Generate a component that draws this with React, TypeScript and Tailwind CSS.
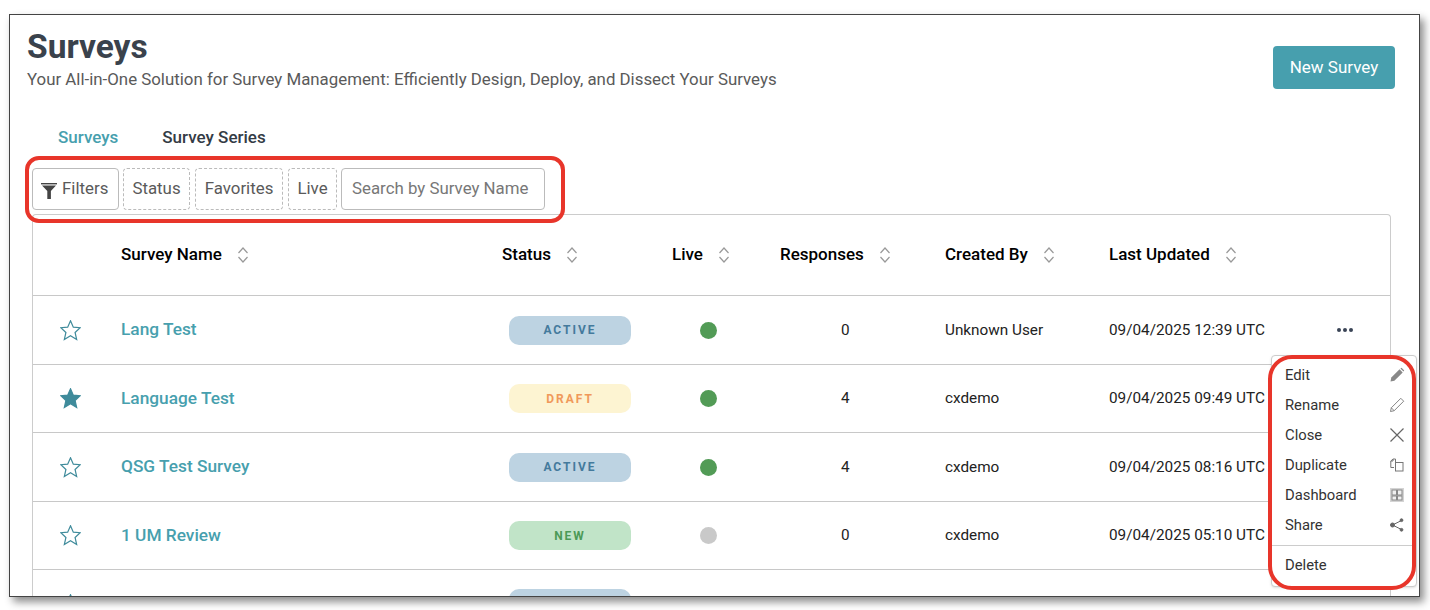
import React from 'react';

const rows = [
  { name: 'Lang Test', fav: false, status: 'ACTIVE', live: true, responses: 0, by: 'Unknown User', updated: '09/04/2025 12:39 UTC' },
  { name: 'Language Test', fav: true, status: 'DRAFT', live: true, responses: 4, by: 'cxdemo', updated: '09/04/2025 09:49 UTC' },
  { name: 'QSG Test Survey', fav: false, status: 'ACTIVE', live: true, responses: 4, by: 'cxdemo', updated: '09/04/2025 08:16 UTC' },
  { name: '1 UM Review', fav: false, status: 'NEW', live: false, responses: 0, by: 'cxdemo', updated: '09/04/2025 05:10 UTC' },
];

const pill: Record<string, string> = {
  ACTIVE: 'bg-[#bdd3e2] text-[#447a9c]',
  DRAFT: 'bg-[#fdf4d2] text-[#f0995a]',
  NEW: 'bg-[#c1e4c8] text-[#4c9a57]',
};

const StarIcon = ({ filled = false }: { filled?: boolean }) => (
  <svg width="21" height="21" viewBox="0 0 21 21" fill={filled ? '#3f8b9b' : 'none'} stroke="#3f8b9b" strokeWidth="1.2">
    <polygon points="10.5,0.8 13.32,7.12 20.2,7.76 15.07,12.48 16.67,19.5 10.5,15.8 4.33,19.5 5.93,12.48 0.8,7.76 7.68,7.12" />
  </svg>
);

const SortIcon = () => (
  <svg width="12" height="18" viewBox="0 0 12 18" fill="none" stroke="#999" strokeWidth="1.2" className="ml-[15px]">
    <path d="M1.5 7 L6 2 L10.5 7" />
    <path d="M1.5 11 L6 16 L10.5 11" />
  </svg>
);

const HeaderCell = ({ label }: { label: string }) => (
  <div className="flex items-center text-[17px] font-medium text-black">
    {label}
    <SortIcon />
  </div>
);

const menuItems = [
  {
    label: 'Edit',
    icon: (
      <svg width="16" height="16" viewBox="0 0 16 16" fill="#888">
        <path d="M1.5 14.5 L2.3 10.6 L10.6 2.3 L13.7 5.4 L5.4 13.7 Z" />
        <path d="M11.4 1.5 L12.6 0.8 L15.2 3.4 L14.5 4.6 Z" />
      </svg>
    ),
  },
  {
    label: 'Rename',
    icon: (
      <svg width="16" height="16" viewBox="0 0 16 16" fill="none" stroke="#777" strokeWidth="0.9">
        <path d="M1.5 14.5 L2.3 10.8 L11.8 1.3 L14.7 4.2 L5.2 13.7 Z" />
        <path d="M2.3 10.8 L5.2 13.7" />
      </svg>
    ),
  },
  {
    label: 'Close',
    icon: (
      <svg width="16" height="16" viewBox="0 0 16 16" fill="none" stroke="#666" strokeWidth="1.2">
        <path d="M1.5 1.5 L14.5 14.5 M14.5 1.5 L1.5 14.5" />
      </svg>
    ),
  },
  {
    label: 'Duplicate',
    icon: (
      <svg width="14" height="14" viewBox="0 0 14 14" fill="none" stroke="#777" strokeWidth="1">
        <path d="M3 1 L5.5 1 L5.5 4 M4 9.5 H0.8 V3 L3 1 V3 H0.8" />
        <rect x="5.5" y="4.5" width="7.5" height="8.5" />
      </svg>
    ),
  },
  {
    label: 'Dashboard',
    icon: (
      <svg width="14" height="14" viewBox="0 0 14 14" fill="#f0f0f0" stroke="#888" strokeWidth="1">
        <rect x="0" y="0" width="14" height="14" fill="#d4d4d4" stroke="none" />
        <rect x="2" y="2" width="4.5" height="5" />
        <rect x="7.5" y="2" width="4.5" height="5" />
        <rect x="2" y="8" width="4.5" height="4" />
        <rect x="7.5" y="8" width="4.5" height="4" />
      </svg>
    ),
  },
  {
    label: 'Share',
    icon: (
      <svg width="14" height="14" viewBox="0 0 14 14" fill="#666" stroke="#666" strokeWidth="1">
        <path d="M11.5 2.5 L2.5 7 L11.5 11.5" fill="none" />
        <circle cx="11.5" cy="2.2" r="1.4" />
        <circle cx="2.5" cy="7" r="2" />
        <circle cx="11.5" cy="11.8" r="1.4" />
      </svg>
    ),
  },
];

const gridCols = 'grid grid-cols-[88px_381px_170px_108px_165px_164px_190px_1fr] items-center';

export default function App() {
  return (
    <div className="w-[1430px] h-[610px] bg-white pt-[14px] pl-[9px] overflow-hidden font-['Roboto',sans-serif]">
      <div className="relative w-[1411px] h-[583px] bg-white border border-[#444] shadow-[4px_5px_8px_rgba(0,0,0,0.45)] overflow-hidden">
        <div className="flex justify-between pl-[17px] pr-[24px] pt-[14px]">
          <div>
            <h1 className="text-[33.5px] leading-[36px] font-bold text-[#3a424c]">Surveys</h1>
            <p className="text-[16.85px] leading-[20px] text-[#5a5a5a] mt-[4px]">
              Your All-in-One Solution for Survey Management: Efficiently Design, Deploy, and Dissect Your Surveys
            </p>
          </div>
          <button className="w-[122px] h-[43px] mt-[17px] rounded bg-[#479fae] text-white text-[17px]">New Survey</button>
        </div>

        <div className="flex items-center pl-[48px] mt-[38px] text-[17px] leading-[20px] font-medium">
          <span className="text-[#479fae]">Surveys</span>
          <span className="ml-[44px] text-[#333b45]">Survey Series</span>
        </div>

        <div className="flex ml-[22px] mt-[21px] h-[42px] gap-[4px] text-[16.85px] text-[#5a5a5a]">
          <div className="w-[87px] flex items-center gap-[5px] pl-[8px] border border-[#bbb] rounded">
            <svg width="16" height="17" viewBox="0 0 16 17" fill="#444" className="mt-[2px]">
              <rect x="0" y="1" width="16" height="1.4" />
              <path d="M1 3.4 H15 L9.9 9 V17 H6.3 V9 Z" />
            </svg>
            Filters
          </div>
          <div className="w-[67px] flex items-center justify-center border border-dashed border-[#bbb] rounded">Status</div>
          <div className="w-[88px] flex items-center justify-center border border-dashed border-[#bbb] rounded ml-[1px]">Favorites</div>
          <div className="w-[49px] flex items-center justify-center border border-dashed border-[#bbb] rounded ml-[1px]">Live</div>
          <div className="w-[204px] flex items-center pl-[10px] border border-[#bbb] rounded text-[#777]">Search by Survey Name</div>
        </div>

        <div className="ml-[22px] mt-[4px] w-[1359px] border-l border-r border-t border-[#ccc] rounded-t text-[15.3px] text-[#222]">
          <div className={`${gridCols} h-[81px] border-b border-[#c8c8c8]`}>
            <div />
            <HeaderCell label="Survey Name" />
            <HeaderCell label="Status" />
            <HeaderCell label="Live" />
            <HeaderCell label="Responses" />
            <HeaderCell label="Created By" />
            <HeaderCell label="Last Updated" />
          </div>
          {rows.map((r, i) => (
            <div key={r.name} className={`${gridCols} h-[68.5px] pt-[1px] border-b border-[#c8c8c8]`}>
              <div className="flex pl-[27px]">
                <StarIcon filled={r.fav} />
              </div>
              <div className="text-[17.3px] font-medium text-[#479fae]">{r.name}</div>
              <div className="pl-[7px]">
                <div className={`w-[122px] h-[29px] rounded-[10px] flex items-center justify-center text-[12px] font-bold tracking-[2px] ${pill[r.status]}`}>
                  {r.status}
                </div>
              </div>
              <div className="pl-[28px]">
                <div className={`w-[17px] h-[17px] rounded-full ${r.live ? 'bg-[#529b56]' : 'bg-[#c9c9c9]'}`} />
              </div>
              <div className="pl-[61px]">{r.responses}</div>
              <div>{r.by}</div>
              <div className="whitespace-nowrap">{r.updated}</div>
              {i === 0 ? (
                <div className="flex gap-[2px] pl-[38px]">
                  <span className="w-[4px] h-[4px] rounded-full bg-[#3a4456]" />
                  <span className="w-[4px] h-[4px] rounded-full bg-[#3a4456]" />
                  <span className="w-[4px] h-[4px] rounded-full bg-[#3a4456]" />
                </div>
              ) : (
                <div />
              )}
            </div>
          ))}
          <div className="flex h-[40px]">
            <div className="w-[88px] pl-[27px] pt-[24px]">
              <StarIcon />
            </div>
            <div className="ml-[388px] mt-[19px] w-[122px] h-[29px] rounded-[10px] bg-[#bdd3e2]" />
          </div>
        </div>

        {/* Row action menu */}
        <div className="absolute left-[1261px] top-[340px] w-[146px] h-[232px] bg-white rounded border border-[#ccc] shadow-sm text-[14.8px] text-[#333] pt-[4px]">
          {menuItems.map((m) => (
            <div key={m.label} className="flex items-center justify-between h-[30px] pl-[13px] pr-[10px]">
              {m.label}
              <span className="w-[18px] flex justify-center">{m.icon}</span>
            </div>
          ))}
          <div className="border-t border-[#ccc] mt-[5px] pt-[6px] pl-[13px] h-[34px] flex items-center">Delete</div>
        </div>

        {/* Red annotations */}
        <div className="absolute left-[15px] top-[141px] w-[540px] h-[67px] rounded-[14px] border-[4px] border-[#e8352a]" />
        <div className="absolute left-[1258px] top-[340px] w-[148px] h-[235px] rounded-[24px] border-[4px] border-[#e8352a]" />
      </div>
    </div>
  );
}
